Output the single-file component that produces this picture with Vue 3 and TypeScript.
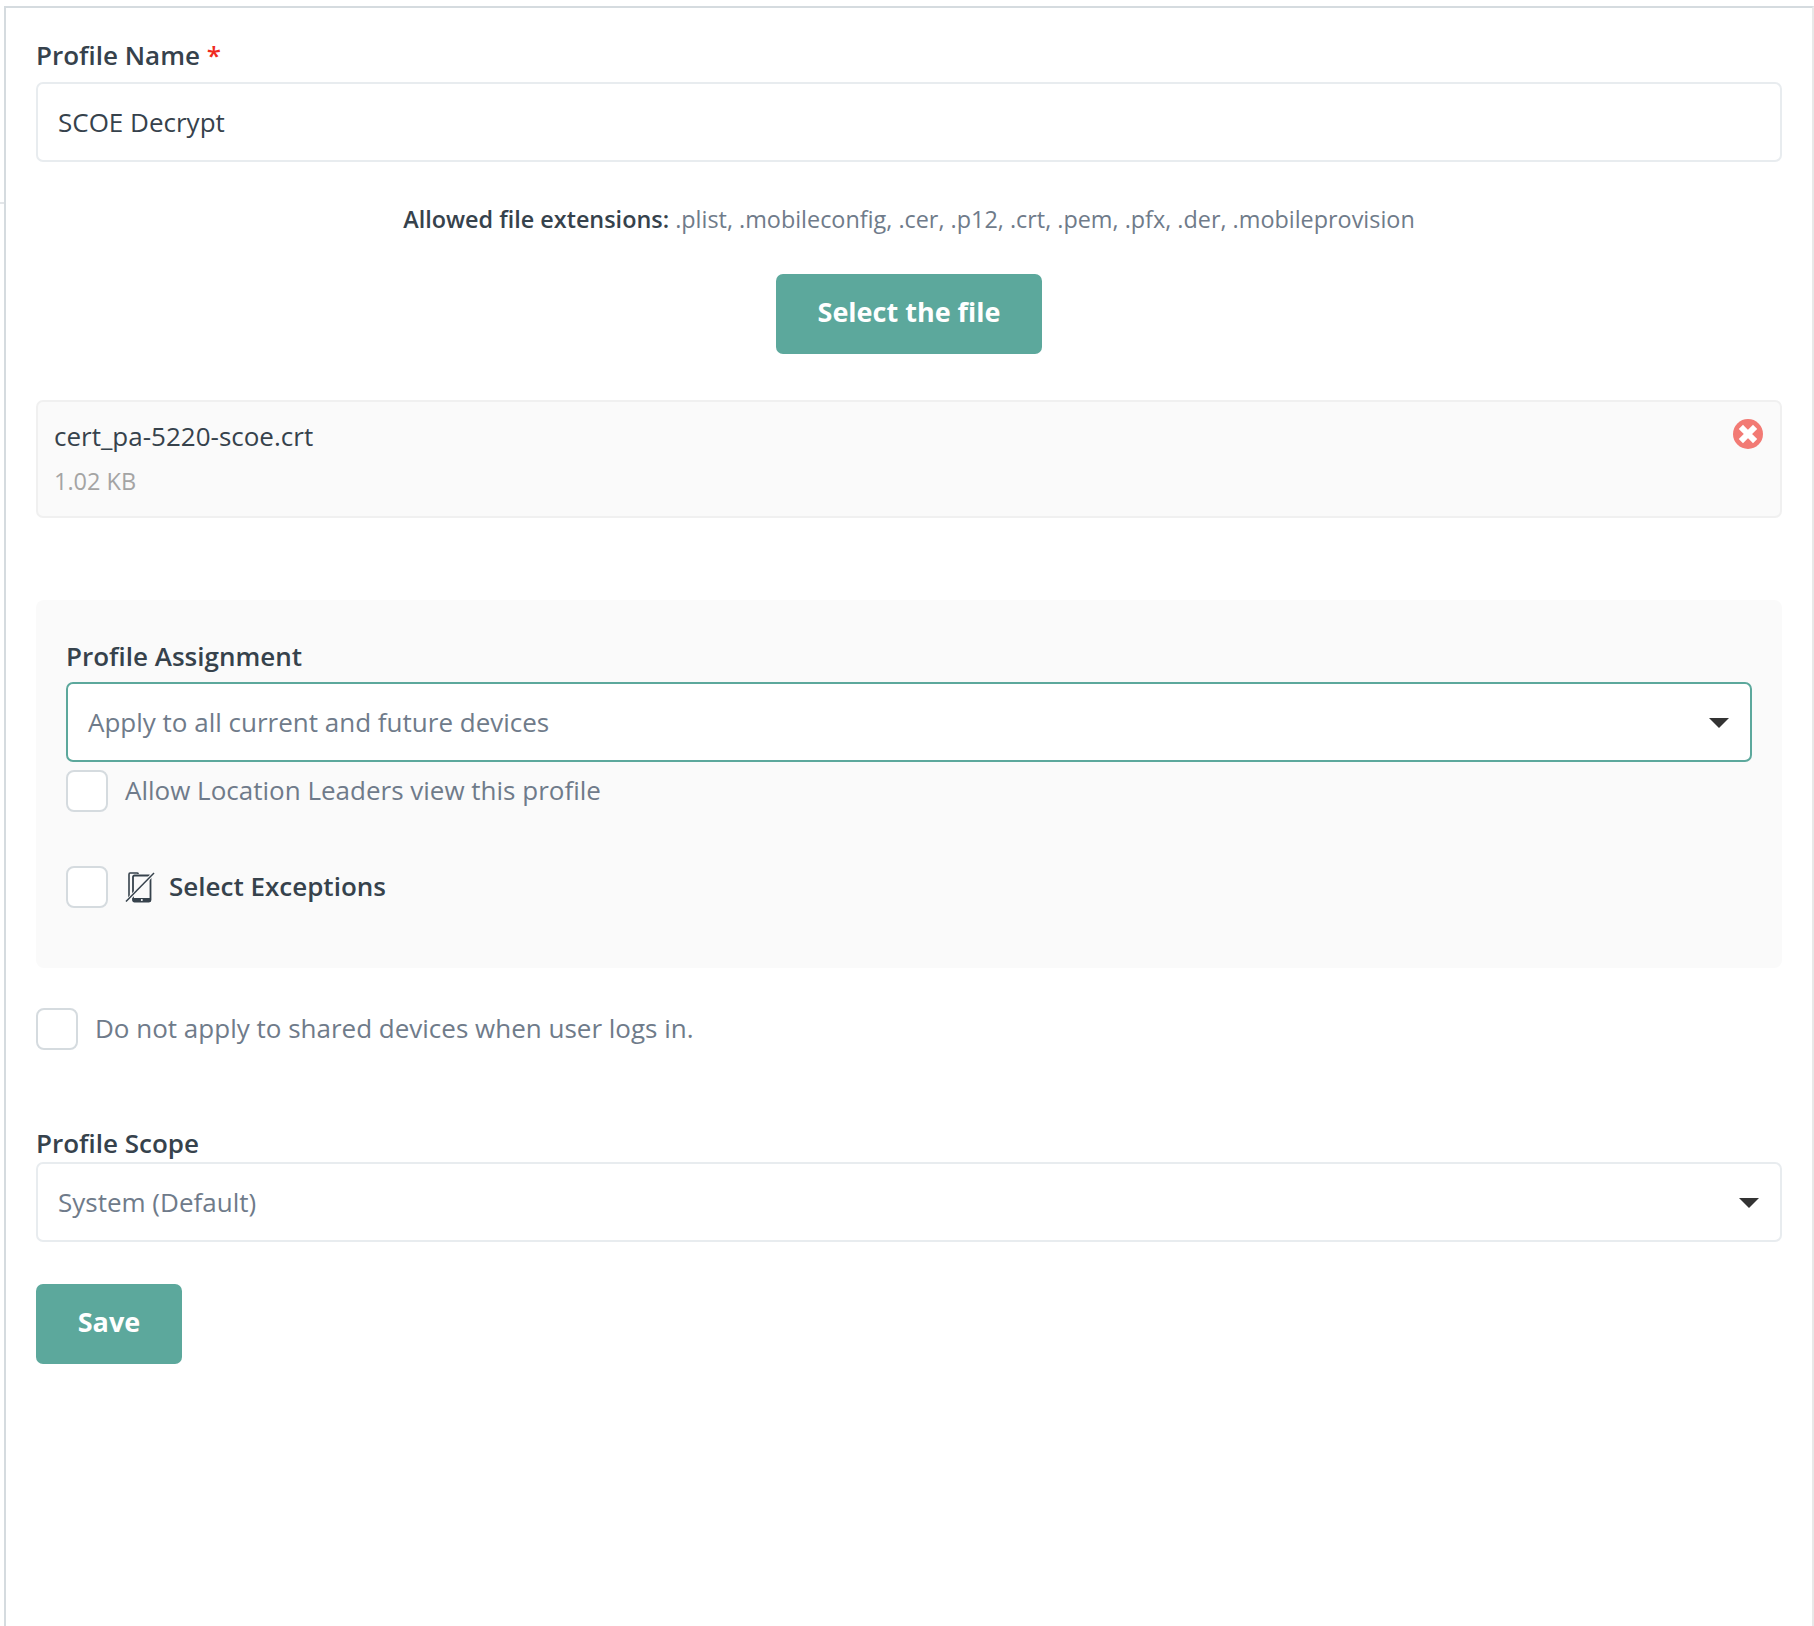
<script setup lang="ts">
const extensions: string = ".plist, .mobileconfig, .cer, .p12, .crt, .pem, .pfx, .der, .mobileprovision";
</script>

<template>
  <div class="page">
    <span class="side-tick"></span>
    <div class="frame">
      <div class="form">
        <div class="label name-label">Profile Name <span class="req">*</span></div>
        <div class="field value-dark">SCOE Decrypt</div>

        <p class="allowed"><b>Allowed file extensions:</b> {{ extensions }}</p>
        <div class="center"><button class="btn btn-file" type="button">Select the file</button></div>

        <div class="file">
          <div class="file-name">cert_pa-5220-scoe.crt</div>
          <div class="file-size">1.02 KB</div>
          <svg class="remove" viewBox="0 0 30 30" width="30" height="30">
            <circle cx="15" cy="15" r="15" fill="#f27a74" />
            <path d="M10 10 L20 20 M20 10 L10 20" stroke="#fff" stroke-width="6" stroke-linecap="square" />
          </svg>
        </div>

        <div class="panel">
          <div class="label">Profile Assignment</div>
          <div class="field select focus">
            <span>Apply to all current and future devices</span><i class="caret"></i>
          </div>
          <div class="check check-leaders">
            <span class="box"></span><span class="check-text">Allow Location Leaders view this profile</span>
          </div>
          <div class="check check-except">
            <span class="box"></span>
            <svg class="phones" viewBox="0 0 30 32" width="30" height="32" fill="none">
              <path d="M13 3 V2.2 Q13 2 12 2 H5 Q4 2 4 3.5 V26 H7" stroke="#36424c" stroke-width="1.6" />
              <rect x="8" y="4.5" width="17.5" height="26" rx="1.5" stroke="#36424c" stroke-width="1.8" />
              <path d="M8 27 H25.5 V29.5 Q25.5 31 24 31 H9 Q8 31 8 29.5 Z" fill="#36424c" />
              <circle cx="16.8" cy="29" r="1" fill="#fff" />
              <path d="M1 31 L29 2" stroke="#fafafa" stroke-width="3.4" />
              <path d="M1 30.5 L29 2" stroke="#36424c" stroke-width="1.5" />
            </svg>
            <b class="except-text">Select Exceptions</b>
          </div>
        </div>

        <div class="check check-shared">
          <span class="box"></span><span class="check-text">Do not apply to shared devices when user logs in.</span>
        </div>

        <div class="label scope-label">Profile Scope</div>
        <div class="field select">
          <span>System (Default)</span><i class="caret"></i>
        </div>

        <button class="btn btn-save" type="button">Save</button>
      </div>
    </div>
  </div>
</template>

<style scoped>
.page {
  position: relative;
  width: 1814px;
  height: 1626px;
  box-sizing: border-box;
  padding: 6px 0 0 4px;
  background: #fff;
  font-family: "Open Sans", "Liberation Sans", sans-serif;
  color: #36424c;
  overflow: hidden;
}
.side-tick {
  position: absolute;
  left: 0;
  top: 202px;
  width: 4px;
  height: 2px;
  background: #e3e6e9;
}
.frame {
  height: 100%;
  box-sizing: border-box;
  border-top: 2px solid #d5dbdf;
  border-left: 2px solid #d5dbdf;
  border-right: 2px solid #e8e8e8;
  padding: 0 30px;
}
.label {
  font-size: 26px;
  font-weight: 600;
  line-height: 36px;
  color: #36424c;
}
.name-label { margin-top: 29px; margin-bottom: 9px; }
.req { color: #ef2b1f; }
.field {
  box-sizing: border-box;
  height: 80px;
  border: 2px solid #e8ecef;
  border-radius: 7px;
  background: #fff;
  padding: 0 20px;
  display: flex;
  align-items: center;
  font-size: 26px;
  color: #6f7b8a;
}
.value-dark { color: #36424c; }
.allowed {
  margin: 39px 0 0;
  text-align: center;
  font-size: 23.4px;
  line-height: 36px;
  color: #6f7b8a;
}
.allowed b { font-weight: 600; color: #36424c; }
.center { display: flex; justify-content: center; margin-top: 37px; }
.btn {
  display: block;
  box-sizing: border-box;
  height: 80px;
  border: 0;
  border-radius: 7px;
  background: #5ca89c;
  color: #fff;
  font-family: inherit;
  font-size: 27px;
  font-weight: 700;
  padding: 0 0 5px;
}
.btn-file { width: 266px; }
.btn-save { width: 146px; margin-top: 42px; }
.file {
  position: relative;
  box-sizing: border-box;
  height: 118px;
  margin-top: 46px;
  padding: 16px 16px;
  background: #fafafa;
  border: 2px solid #f0f0f0;
  border-radius: 7px;
}
.file-name { font-size: 26px; line-height: 36px; color: #36424c; }
.file-size { font-size: 23.5px; line-height: 36px; margin-top: 9px; color: #a4a4a4; }
.remove { position: absolute; right: 17px; top: 17px; }
.panel {
  box-sizing: border-box;
  height: 368px;
  margin-top: 82px;
  padding: 38px 30px 0;
  background: #fafafa;
  border-radius: 8px;
}
.panel .label { margin-bottom: 8px; }
.select { justify-content: space-between; }
.focus { border-color: #5ca89c; }
.caret {
  width: 0;
  height: 0;
  border-left: 10px solid transparent;
  border-right: 10px solid transparent;
  border-top: 10px solid #333;
  margin-top: 2px;
  margin-right: 1px;
}
.check { display: flex; align-items: center; }
.box {
  flex: none;
  box-sizing: border-box;
  width: 42px;
  height: 42px;
  border: 2px solid #d5dbdf;
  border-radius: 8px;
  background: #fff;
}
.check-text { margin-left: 17px; margin-bottom: 2px; font-size: 26px; color: #6f7b8a; }
.check-leaders { margin-top: 8px; }
.check-except { margin-top: 54px; }
.phones { margin-left: 17px; flex: none; }
.except-text { margin-left: 14px; margin-bottom: 2px; font-size: 26px; font-weight: 600; color: #36424c; }
.check-shared { margin-top: 40px; }
.scope-label { margin-top: 75px; margin-bottom: 1px; }
</style>
